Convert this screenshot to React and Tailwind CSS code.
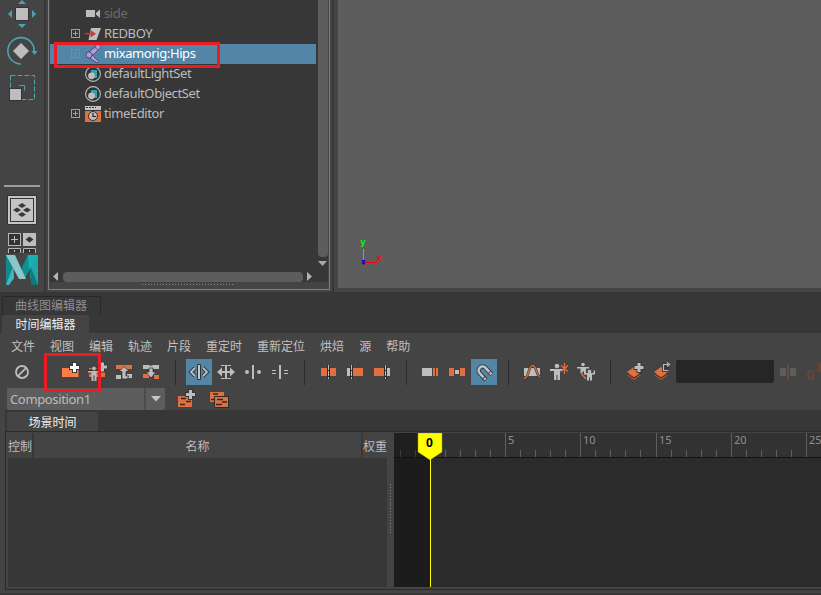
import React from "react";

const G = "#bdbdbd";
const O = "#e0703f";
const D = "#2b2b2b";

const MENUS = ["文件", "视图", "编辑", "轨迹", "片段", "重定时", "重新定位", "烘焙", "源", "帮助"];

const Svg = ({ w = 26, h = 26, className = "", children }) => (
  <svg width={w} height={h} viewBox={`0 0 ${w} ${h}`} className={`block shrink-0 ${className}`}>
    {children}
  </svg>
);

const Plus = ({ x, y, color = G }) => (
  <g>
    <path d={`M${x} ${y - 5.5}v11M${x - 5.5} ${y}h11`} stroke="#383838" strokeWidth="5" />
    <path d={`M${x} ${y - 4.5}v9M${x - 4.5} ${y}h9`} stroke={color} strokeWidth="3" />
  </g>
);

const Separator = () => <div className="ml-[10px] mr-[9px] h-[25px] w-px shrink-0 bg-[#2b2b2b]" />;

const ToolButton = ({ active, children }) => (
  <button className={`h-[26px] w-[26px] shrink-0 ${active ? "bg-[#5285a6]" : ""}`}>
    <Svg>{children}</Svg>
  </button>
);

/* Left tool box */
const ToolBox = () => (
  <aside className="flex w-[44px] shrink-0 flex-col bg-[#444]">
    <Svg w={44} h={32}>
      <rect x="15.5" y="7.5" width="13" height="13" fill={G} stroke="#333" />
      <path d="M22 0l4 4h-8zM22 28l4-4h-8zM8 14l4-4v8zM36 14l-4-4v8z" fill="#4ba3b3" />
    </Svg>
    <Svg w={44} h={38}>
      <path d="M21 32A13.2 13.2 0 1 1 34.2 20" fill="none" stroke="#4ba3b3" strokeWidth="1.6" />
      <path d="M31.500 19h6l-3 4z" fill="#4ba3b3" />
      <path d="M21 10.500l8.500 8.500l-8.500 8.500l-8.500-8.500z" fill={G} stroke="#333" strokeWidth="0.7" />
    </Svg>
    <Svg w={44} h={34}>
      <rect x="10.500" y="5.500" width="24" height="24" fill="none" stroke="#4ba3b3" strokeDasharray="5 2" />
      <path d="M19 15.500h5.500v5" fill="none" stroke="#4ba3b3" />
      <rect x="9.500" y="18.500" width="12" height="12" fill={G} stroke="#333" />
    </Svg>
    <div className="mx-[4px] mt-[81px] h-[2px] bg-[#9d9d9d]" />
    <Svg w={44} h={43} className="mt-[8px]">
      <rect x="7.500" y="0.500" width="29" height="29" fill="#c4c4c4" stroke="#333" />
      <rect x="10.500" y="3.500" width="23" height="23" fill="#c4c4c4" stroke="#333" />
      <path
        d="M22 8l4 2.500-4 2.500-4-2.500zM22 17l4 2.500-4 2.500-4-2.500zM17 12.500l4 2.500-4 2.500-4-2.500zM27 12.500l4 2.500-4 2.500-4-2.500z"
        fill="#3a3a3a"
      />
    </Svg>
    <Svg w={44} h={14} className="-mt-[5px]">
      <rect x="8.500" y="0.500" width="12" height="12" fill="#333" stroke="#b5b5b5" />
      <path d="M11 6.500h7M14.500 3v7" stroke={G} />
      <rect x="23" y="0" width="13" height="13" fill="#bdbdbd" />
      <path d="M29.500 3.500l4 3-4 3-4-3z" fill="#333" />
    </Svg>
    <Svg w={44} h={5} className="mt-px">
      <path d="M8.500 5v-4.500h12V5M23.500 5v-4.500h12V5" fill="#333" stroke="#b5b5b5" />
      <path d="M14.500 2v2M29.500 2v2" stroke={G} />
    </Svg>
    <Svg w={44} h={32} className="mt-[2px]">
      <path d="M6 0h8v24l-8 6z" fill="#14888c" />
      <path d="M6 30l7-18 1 11-5 7z" fill="#3fb8b8" />
      <path d="M38 0h-8v23l8 7z" fill="#21a5a5" />
      <path d="M30 10l8 20h-7z" fill="#11797d" />
      <path d="M28 0h10l-14 24h-5z" fill="#19b2b0" />
      <path d="M28 0l-6 12 2 12 5-9z" fill="#118e93" />
      <path d="M6 0h9l11 24h-7z" fill="#8bc6ca" />
    </Svg>
  </aside>
);

const CameraIcon = () => (
  <Svg w={17} h={20}>
    <path d="M1 6h9v7H1zM11 9l4-3.500v8.500l-4-3.500z" fill={G} />
  </Svg>
);

const TransformIcon = () => (
  <Svg w={17} h={20}>
    <path d="M6 4h10l-4.500 12H3.500z" fill={G} />
    <path d="M0 9.700h7" stroke="#c8393b" strokeWidth="1.500" />
    <path d="M5.500 6l5.500 3.700-5.500 3.700z" fill="#c8393b" />
  </Svg>
);

const JointIcon = () => (
  <Svg w={17} h={20}>
    <path
      d="M11.500 2L2 9.500l3 4L14.500 5zM2.500 12.500l9.500 6.500 1.500-1.500-7-7.500z"
      fill="#b69be0"
      stroke="#3f3d63"
      strokeWidth="0.800"
    />
    <circle cx="13" cy="3" r="2.500" fill="#b69be0" stroke="#3f3d63" strokeWidth="0.600" />
    <circle cx="4" cy="11" r="3" fill="#b69be0" stroke="#3f3d63" strokeWidth="0.800" />
  </Svg>
);

const SetIcon = () => (
  <Svg w={17} h={20}>
    <circle cx="8" cy="10" r="7.400" fill="#333" stroke={G} strokeWidth="1.100" />
    <path d="M6 6h6v8h-4v-4h-2z" fill="#2da5ae" />
    <circle cx="6.500" cy="11.800" r="3.400" fill={G} />
  </Svg>
);

const TimeEditorIcon = () => (
  <Svg w={17} h={20}>
    <path d="M0 2h16v4H0z" fill="#c4c4c4" />
    <path d="M1 3.500h8M10 3.500h1" stroke="#333" strokeDasharray="2 1" />
    <path d="M0 7h16v11H0z" fill={O} />
    <circle cx="8" cy="12" r="4.500" fill={G} stroke="#333" />
    <path d="M8 9v3.500h3" fill="none" stroke="#222" strokeWidth="1.200" />
  </Svg>
);

const NODES = [
  { name: "side", icon: <CameraIcon />, dim: true },
  { name: "REDBOY", icon: <TransformIcon />, expand: true },
  { name: "mixamorig:Hips", icon: <JointIcon />, expand: true, selected: true },
  { name: "defaultLightSet", icon: <SetIcon /> },
  { name: "defaultObjectSet", icon: <SetIcon /> },
  { name: "timeEditor", icon: <TimeEditorIcon />, expand: true },
];

const TreeRow = ({ node }) => (
  <div className={`flex h-[20px] w-[266px] items-center pl-[21px] ${node.selected ? "bg-[#5285a6]" : ""}`}>
    <Svg w={14} h={20}>
      {node.expand && (
        <g stroke={node.selected ? "#7d8b96" : "#a0a0a0"} fill="none">
          <rect x="0.500" y="5.500" width="8" height="8" />
          <path d="M2 9.500h5M4.500 7v5" />
        </g>
      )}
    </Svg>
    {node.icon}
    <span
      className={`mb-[2px] ml-[2px] text-[13px] leading-[18px] tracking-[-0.4px] ${
        node.dim ? "text-[#6c6c6c]" : node.selected ? "text-white" : "text-[#bcbcbc]"
      }`}
    >
      {node.name}
    </span>
  </div>
);

const Outliner = () => (
  <section className="ml-[2px] flex h-[290px] w-[282px] shrink-0 flex-col border border-t-0 border-[#808080] bg-[#444] px-px">
    <div className="flex h-[271px] bg-[#373737]">
      <div className="w-[268px] pt-[4px]">
        {NODES.map((n) => (
          <TreeRow key={n.name} node={n} />
        ))}
      </div>
      <div className="w-[10px]">
        <div className="h-[257px] rounded-b-[4px] bg-[#5d5d5d]" />
        <Svg w={10} h={10}>
          <path d="M0 4h9l-4.500 5z" fill="#a9a9a9" />
        </Svg>
      </div>
    </div>
    <div className="flex h-[11px] items-center bg-[#373737]">
      <Svg w={13} h={11}>
        <path d="M8 1v9L3 5.500z" fill="#b4b4b4" />
      </Svg>
      <div className="mt-px h-[10px] w-[240px] rounded-[4px] bg-[#5d5d5d]" />
      <Svg w={12} h={11}>
        <path d="M4 1v9l5-4.500z" fill="#b4b4b4" />
      </Svg>
    </div>
    <Svg w={278} h={7}>
      <path d="M92 2.500h92" stroke="#8a8a8a" strokeDasharray="1 2" />
    </Svg>
  </section>
);

const Viewport = () => (
  <main className="flex flex-1 items-end border-b-4 border-l-4 border-[#444] bg-[#5d5d5d]">
    <Svg w={60} h={60}>
      <text x="22.500" y="17" fontSize="9" fontWeight="bold" fontFamily="Liberation Sans, sans-serif" fill="#0f0">
        y
      </text>
      <text x="38.500" y="33" fontSize="9" fontWeight="bold" fontFamily="Liberation Sans, sans-serif" fill="#f00">
        x
      </text>
      <path d="M25.500 21v13" stroke="#0f0" />
      <path d="M26 34.500h13" stroke="#f00" />
      <path d="M23.500 34h4M25.500 32v5M24 32.500h3M24 35.500h3" stroke="#00f" />
    </Svg>
  </main>
);

const Toolbar = () => (
  <div className="flex h-[27px] items-end gap-px overflow-hidden pl-[9px]">
    <ToolButton>
      <circle cx="13" cy="13" r="6" fill="none" stroke={G} strokeWidth="1.800" />
      <path d="M8.800 17.200l8.400-8.400" stroke={G} strokeWidth="1.800" />
    </ToolButton>
    <div className="w-[20px] shrink-0" />
    <ToolButton>
      <path d="M5 9h8l2-1h6.500v10H5z" fill="#ff7b47" />
      <Plus x={17.500} y={8.500} color="#fff" />
    </ToolButton>
    <ToolButton>
      <path d="M5 9h16v9H5z" fill={O} />
      <Plus x={18.500} y={8} />
      <path d="M4 12.500h12M10 12v6" stroke={D} strokeWidth="4" />
      <circle cx="10" cy="9.500" r="2.300" fill={G} stroke={D} strokeWidth="0.600" />
      <path d="M4 12.800h12" stroke={G} strokeWidth="1.600" />
      <path d="M7.500 12.500V22h2v-5.500h1V22h2v-9.500z" fill={G} />
    </ToolButton>
    <ToolButton>
      <path d="M5 6h16v4h-4l-1 1h-6l-1-1H5z" fill={O} />
      <path d="M5 16h5v4H5zM16 15h5v4h-5z" fill={G} />
      <path d="M13 7.500l5 5h-3v4.500h3l-2 3h-5v-7.500H8z" fill={G} stroke={D} strokeWidth="0.700" />
    </ToolButton>
    <ToolButton>
      <path d="M5 6h6l2 1 2-1h6v4H5z" fill={G} />
      <path d="M5 15h6v4H5zM16 16h5v4h-5z" fill={O} />
      <path d="M11 9h4v4h3l-5 6-5-6h3z" fill={G} stroke={D} strokeWidth="0.700" />
    </ToolButton>
    <Separator />
    <ToolButton active>
      <path d="M9 9l-4 4 4 4M17 9l4 4-4 4" fill="none" stroke="#32414b" strokeWidth="4" />
      <path d="M9 9l-4 4 4 4M17 9l4 4-4 4" fill="none" stroke={G} strokeWidth="1.800" />
      <path d="M11.500 5.500h3v15h-3z" fill="#c8c8c8" stroke="#333" />
    </ToolButton>
    <ToolButton>
      <path d="M5 13h16M13 6v14" stroke={G} strokeWidth="2" />
      <path d="M4 13l5-4.500v9zM22 13l-5-4.500v9z" fill={G} />
      <path d="M8 6.500h3.500l1.500 1.500 1.500-1.500H18M8 19.500h3.500l1.500-1.500 1.500 1.500H18" fill="none" stroke={G} />
    </ToolButton>
    <ToolButton>
      <path d="M13 6v14" stroke={G} strokeWidth="2" />
      <circle cx="7" cy="13" r="2" fill={G} />
      <circle cx="19" cy="13" r="2" fill={G} />
    </ToolButton>
    <ToolButton>
      <path d="M13 6v14" stroke={G} strokeWidth="2" />
      <path d="M5 11.500h4M5 14.500h4M17 11.500h4M17 14.500h4" stroke={G} />
    </ToolButton>
    <Separator />
    <ToolButton>
      <path d="M6 9h6v8H6zM15 9h6v8h-6z" fill={O} />
      <path d="M13.500 6v14" stroke={D} strokeWidth="3" />
      <path d="M13.500 6v14" stroke={G} strokeDasharray="5 1" />
    </ToolButton>
    <ToolButton>
      <path d="M5 9h4v8H5z" fill={G} />
      <path d="M11 9h10v8H11z" fill={O} />
      <path d="M9.500 6v14" stroke={D} strokeWidth="3" />
      <path d="M9.500 6v14" stroke={G} strokeDasharray="5 1" />
    </ToolButton>
    <ToolButton>
      <path d="M5 9h11v8H5z" fill={O} />
      <path d="M18 9h3v8h-3z" fill={G} />
      <path d="M16.500 6v14" stroke={D} strokeWidth="3" />
      <path d="M16.500 6v14" stroke={G} strokeDasharray="5 1" />
    </ToolButton>
    <Separator />
    <ToolButton>
      <path d="M5 9h10v8H5z" fill={G} />
      <path d="M16 9h2v8h-2zM19 9h2v8h-2z" fill={O} />
    </ToolButton>
    <ToolButton>
      <path d="M5 9h5v8H5zM16 9h5v8h-5z" fill={O} />
      <path d="M11 11h4v4h-4z" fill={G} />
    </ToolButton>
    <ToolButton active>
      <g transform="rotate(-43 13 13)" fill="none">
        <path d="M9 20v-9a4 4 0 0 1 8 0v9" stroke="#39444b" strokeWidth="4.500" />
        <path d="M9 19.500v-8.500a4 4 0 0 1 8 0v8.500" stroke="#c8c8c8" strokeWidth="2.500" />
        <path d="M7 17h4M15 17h4" stroke="#39444b" />
      </g>
    </ToolButton>
    <Separator />
    <ToolButton>
      <path d="M5 9h16v8H5z" fill={G} />
      <path d="M5 19.500c5.500 0 4-13 8.500-13s3 9 7.500 11.500" fill="none" stroke={D} strokeWidth="2.500" />
      <path d="M5 19.500c5.500 0 4-13 8.500-13s3 9 7.500 11.500" fill="none" stroke={O} strokeWidth="1.400" />
    </ToolButton>
    <ToolButton>
      <circle cx="11" cy="7" r="2.300" fill={G} />
      <path d="M4 10h13v2h-3v9h-2.500v-5h-1v5H8v-9H4z" fill={G} />
      <path d="M18.500 4v11M15 6.500l7 6M22 6.500l-7 6" stroke={O} strokeWidth="1.300" />
    </ToolButton>
    <ToolButton>
      <circle cx="10" cy="5.500" r="1.800" fill={G} />
      <path d="M4 8h12v1.500h-3v6h-1.500v-3h-2v2H7.500V9.500H4z" fill={G} />
      <path d="M8.500 15l4.500 5" stroke={O} strokeWidth="1.300" />
      <circle cx="16.500" cy="12.500" r="2.300" fill={G} stroke={D} strokeWidth="0.700" />
      <path d="M11 12v3.500h3v6h2v-3h1v3h2v-6h3v-4h-1.500v2.500h-8V12z" fill={G} />
    </ToolButton>
    <Separator />
    <ToolButton>
      <path d="M13 11l7 5-7 5-7-5z" fill="#b85833" />
      <path d="M6 14.500l7 4.500 7-4.500" fill="none" stroke={D} />
      <path d="M13 8l7 5-7 5-7-5z" fill={O} />
      <Plus x={18} y={8.500} />
    </ToolButton>
    <ToolButton>
      <path d="M13 11l7 5-7 5-7-5z" fill="#b85833" />
      <path d="M6 14.500l7 4.500 7-4.500" fill="none" stroke={D} />
      <path d="M13 8l7 5-7 5-7-5z" fill={O} />
      <path d="M14 4h7v9h-7z" fill="#383838" />
      <path d="M20 5.500h-4.500v6h5M19 3.500l2.500 2-2.500 2" fill="none" stroke={G} strokeWidth="1.200" />
    </ToolButton>
    <div className="mb-[2px] ml-px h-[23px] w-[98px] shrink-0 rounded-[2px] bg-[#262626]" />
    <ToolButton>
      <path d="M5 9h6v8H5zM15 9h6v8h-6z" fill="#5d5d5d" />
      <path d="M13 5v16" stroke="#6b4b3f" strokeWidth="2" />
    </ToolButton>
    <div className="flex h-[26px] shrink-0 pl-[4px] text-[15px] leading-[24px] font-bold text-[#664539]">
      <span className="mt-[3px]">0</span>
      <span className="-mt-[3px] w-[3px] text-[10px]">-</span>
      <Svg w={4} h={20}>
        <path d="M0 4h3v9H0z" fill="#664539" />
      </Svg>
    </div>
  </div>
);

const CompositionBar = () => (
  <div className="flex h-[25px] items-start pl-[7px] pt-[3px]">
    <div className="flex h-[22px] w-[158px] rounded-[2px] bg-[#5d5d5d] text-[13px] leading-[22px] tracking-[-0.35px] text-[#bcbcbc]">
      <span className="w-[137px] pl-[3px]">Composition1</span>
      <div className="flex w-[21px] items-center justify-center border-l-2 border-[#4c4c4c]">
        <Svg w={10} h={6}>
          <path d="M0 0h10L5 5.500z" fill="#c4c4c4" />
        </Svg>
      </div>
    </div>
    <Svg w={24} h={22} className="ml-[12px]">
      <path d="M1 8h14v11H1z" fill={O} />
      <path d="M4 10.500h5M9 13.500h5M3 16.500h5" stroke={D} strokeWidth="1.700" />
      <Plus x={13.500} y={6.500} />
    </Svg>
    <Svg w={24} h={22} className="ml-[8px]">
      <path d="M1 4h14v10H1z" fill={O} />
      <path d="M4 6h5M2 11.500h5" stroke={D} strokeWidth="1.500" />
      <path d="M5.500 8.500h14v11h-14z" fill={O} stroke={D} />
      <path d="M8 11.500h6M13 14h5M7 16.500h6" stroke={D} strokeWidth="1.500" />
    </Svg>
  </div>
);

const tickX = (frame) => (frame < 15 ? 36 : 37) + frame * 15;

const Timeline = () => {
  const frames = Array.from({ length: 28 }, (_, i) => i - 2);

  return (
    <div className="flex-1 overflow-hidden">
      <Svg w={427} h={154}>
        <path d="M0 0h427v24H0z" fill="#323232" />
        <path d="M0 0h36v24H0z" fill="#1f1f1f" />
        <path d="M0 25h427v129H0z" fill="#2b2b2b" />
        <path d="M0 25h36v129H0z" fill="#1c1c1c" />
        <path d="M0 24h427v1H0z" fill="#121212" />
        {frames.map((f) => (
          <rect
            key={f}
            x={tickX(f)}
            y={f % 5 === 0 ? 0 : 17}
            width="1"
            height={f % 5 === 0 ? 24 : 7}
            fill={f < 0 ? "#3c3c3c" : "#5f5f5f"}
          />
        ))}
        {[5, 10, 15, 20, 25].map((f) => (
          <text key={f} x={tickX(f) + 3} y="11" fontSize="11" fill="#8f8f8f">
            {f}
          </text>
        ))}
        <path d="M24 0h24v19l-12 8-12-8z" fill="#ff0" stroke="#a5a500" strokeWidth="0.500" />
        <path d="M36 26h1v128h-1z" fill="#ff0" />
        <text x="35.500" y="14" fontSize="12" fontWeight="bold" textAnchor="middle" fill="#000">
          0
        </text>
      </Svg>
    </div>
  );
};

const SceneTime = () => (
  <div className="ml-[5px] flex h-[159px] border border-r-0 border-[#2b2b2b] pt-px pl-px">
    <div className="flex w-[380px] shrink-0 flex-col">
      <div className="flex h-[25px] text-[12px] leading-[27px] text-[#bcbcbc]">
        <div className="w-[27px] border-r-2 border-[#373737] pl-px whitespace-nowrap">控制</div>
        <div className="w-[329px] border-r-2 border-[#373737] text-center">名称</div>
        <div className="w-[24px] whitespace-nowrap">权重</div>
      </div>
      <div className="ml-px h-[129px] bg-[#373737]" />
    </div>
    <Svg w={7} h={154}>
      <path d="M3.500 51v49" stroke="#858585" strokeDasharray="1 2" />
    </Svg>
    <Timeline />
  </div>
);

const TimeEditor = () => (
  <section className="h-[303px] bg-[#373737] pt-[4px]">
    <div className="ml-[2px] h-[19px] w-[99px] rounded-t-[2px] border border-b-0 border-[#292929] pl-[12px] text-[12px] leading-[18px] text-[#8e8e8e]">
      曲线图编辑器
    </div>
    <div className="ml-[2px] h-[18px] w-[87px] rounded-t-[2px] bg-[#444] text-center text-[12px] leading-[20px] text-[#eee]">
      时间编辑器
    </div>
    <div className="flex h-[260px] flex-col bg-[#444]">
      <nav className="flex h-[25px] gap-[15px] pl-[11px] text-[12px] leading-[27px] text-[#c0c0c0]">
        {MENUS.map((m) => (
          <span key={m} className="shrink-0">
            {m}
          </span>
        ))}
      </nav>
      <Toolbar />
      <CompositionBar />
      <div className="ml-[5px] h-[21px] bg-[#373737] pt-[2px]">
        <div className="ml-[2px] h-[19px] w-[91px] rounded-t-[2px] bg-[#444] text-center text-[12px] leading-[21px] text-[#eee]">
          场景时间
        </div>
      </div>
      <SceneTime />
    </div>
  </section>
);

const App = () => {
  return (
    <div className="relative h-[595px] w-[821px] overflow-hidden bg-[#373737] font-['Noto_Sans','Noto_Sans_CJK_SC',sans-serif]">
      <div className="flex h-[292px]">
        <ToolBox />
        <div className="flex w-[288px] shrink-0 border-l-2 border-[#373737] bg-[#444]">
          <Outliner />
        </div>
        <div className="w-[2px] shrink-0 bg-[#373737]" />
        <Viewport />
      </div>
      <TimeEditor />

      {/* Highlight frames */}
      <div className="absolute top-[42px] left-[54px] h-[26px] w-[166px] border-[3px] border-[#ed1c24]" />
      <div className="absolute top-[353px] left-[44px] h-[39px] w-[57px] border-[3px] border-[#ed1c24]" />
    </div>
  );
};

export default App;
